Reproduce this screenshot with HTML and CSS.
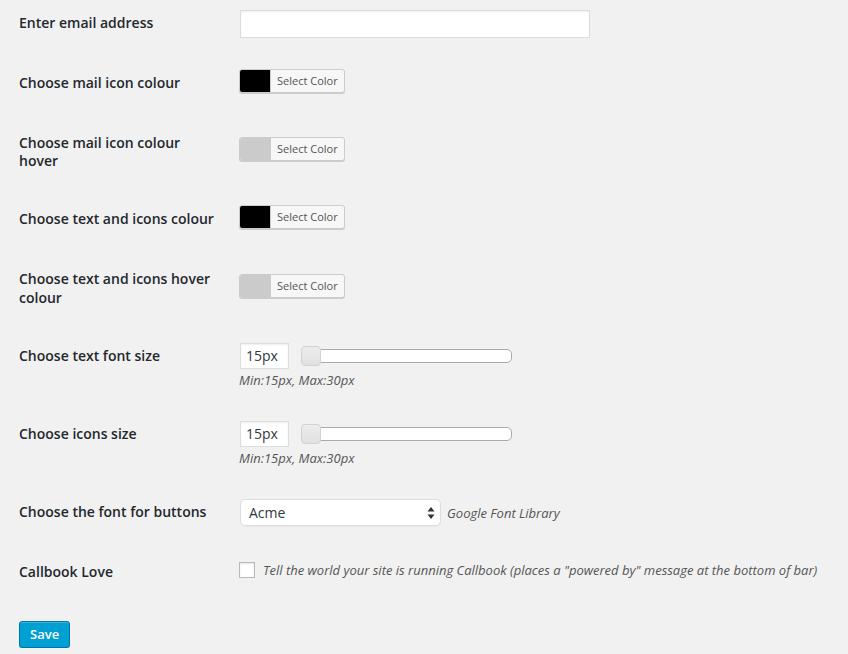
FILE: index.html
```html
<!DOCTYPE html>
<html lang="en">
<head>
<meta charset="utf-8">
<title>Callbook settings</title>
<link rel="stylesheet" href="styles.css">
</head>
<body>
<div class="wrap">
  <table class="form-table">
    <tbody>
      <tr>
        <th>Enter email address</th>
        <td><input class="regular-text" type="email" value=""></td>
      </tr>
      <tr>
        <th>Choose mail icon colour</th>
        <td><span class="color-btn"><span class="swatch swatch-black"></span><span class="color-label">Select Color</span></span></td>
      </tr>
      <tr>
        <th>Choose mail icon colour hover</th>
        <td><span class="color-btn"><span class="swatch swatch-grey"></span><span class="color-label">Select Color</span></span></td>
      </tr>
      <tr>
        <th>Choose text and icons colour</th>
        <td><span class="color-btn"><span class="swatch swatch-black"></span><span class="color-label">Select Color</span></span></td>
      </tr>
      <tr>
        <th>Choose text and icons hover colour</th>
        <td><span class="color-btn"><span class="swatch swatch-grey"></span><span class="color-label">Select Color</span></span></td>
      </tr>
      <tr>
        <th>Choose text font size</th>
        <td>
          <div class="slider-row">
            <input class="num" type="text" value="15px">
            <span class="track"><span class="handle"></span></span>
          </div>
          <p class="description">Min:15px, Max:30px</p>
        </td>
      </tr>
      <tr>
        <th>Choose icons size</th>
        <td>
          <div class="slider-row">
            <input class="num" type="text" value="15px">
            <span class="track"><span class="handle"></span></span>
          </div>
          <p class="description">Min:15px, Max:30px</p>
        </td>
      </tr>
      <tr>
        <th>Choose the font for buttons</th>
        <td>
          <div class="select-row">
            <span class="select">Acme
              <svg class="arrows" width="8" height="14" viewBox="0 0 8 14"><path d="M4 1 L7.5 5.5 H0.5 Z M4 13 L7.5 8.5 H0.5 Z" fill="#333"/></svg>
            </span>
            <span class="description inline">Google Font Library</span>
          </div>
        </td>
      </tr>
      <tr>
        <th>Callbook Love</th>
        <td class="check-cell">
          <span class="checkbox"></span>
          <span class="description inline">Tell the world your site is running Callbook (places a "powered by" message at the bottom of bar)</span>
        </td>
      </tr>
    </tbody>
  </table>
  <p class="submit"><button class="button-primary" type="button">Save</button></p>
</div>
</body>
</html>
```
FILE: styles.css
```css
html, body {
  margin: 0;
  padding: 0;
  background: #f1f1f1;
}
body {
  font-family: "Open Sans", "Liberation Sans", sans-serif;
  font-size: 13px;
  color: #444;
}
.wrap {
  padding-left: 19px;
  margin-top: -6px;
}
.form-table {
  border-collapse: collapse;
  border-spacing: 0;
}
.form-table th {
  width: 200px;
  padding: 20px 10px 20px 0;
  text-align: left;
  vertical-align: top;
  font-size: 14px;
  font-weight: 600;
  line-height: 1.3;
  color: #23282d;
}
.form-table td {
  padding: 15px 10px;
  vertical-align: middle;
  line-height: 1.3;
}
.regular-text {
  display: block;
  box-sizing: border-box;
  width: 350px;
  height: 28px;
  margin: 1px 0 1px 1px;
  padding: 3px 5px;
  border: 1px solid #ddd;
  box-shadow: inset 0 1px 2px rgba(0,0,0,0.07);
  background: #fff;
  font: 14px "Open Sans", sans-serif;
  outline: none;
}
.color-btn {
  display: inline-flex;
  height: 24px;
  box-sizing: border-box;
  margin: 0 6px 6px 0;
  border: 1px solid #ccc;
  border-radius: 3px;
  background: #f7f7f7;
  box-shadow: 0 1px 0 #ccc;
  overflow: hidden;
  vertical-align: top;
}
.swatch {
  width: 30px;
  border-right: 1px solid #ccc;
}
.swatch-black { background: #000; }
.swatch-grey { background: #cbcbcb; }
.color-label {
  padding: 0 6px;
  font-size: 11px;
  line-height: 22px;
  color: #555;
}
.slider-row {
  display: flex;
  align-items: center;
  height: 28px;
}
.num {
  box-sizing: border-box;
  width: 49px;
  height: 26px;
  margin: 1px 12px 1px 1px;
  padding: 3px 5px;
  border: 1px solid #ddd;
  box-shadow: inset 0 1px 2px rgba(0,0,0,0.07);
  background: #fff;
  font: 14px "Open Sans", sans-serif;
  color: #32373c;
  outline: none;
}
.track {
  position: relative;
  box-sizing: border-box;
  width: 211px;
  height: 14px;
  border: 1px solid #aaa;
  border-radius: 5px;
  background: #fff;
}
.handle {
  position: absolute;
  left: -1px;
  top: -4px;
  box-sizing: border-box;
  width: 20px;
  height: 20px;
  border: 1px solid #d3d3d3;
  border-radius: 4px;
  background: linear-gradient(#ececec, #e1e1e1);
}
.description {
  margin: 0;
  font-size: 13px;
  font-style: italic;
  line-height: 20px;
  color: #555;
}
.description.inline {
  margin: 0;
}
.select-row {
  display: flex;
  align-items: center;
  gap: 6px;
  height: 30px;
}
.select {
  position: relative;
  box-sizing: border-box;
  width: 201px;
  height: 27px;
  margin-left: 1px;
  padding: 0 8px;
  border: 1px solid #ddd;
  border-radius: 5px;
  background: #fff;
  box-shadow: 0 1px 1px rgba(0,0,0,0.04);
  font-size: 14px;
  line-height: 25px;
  color: #32373c;
}
.arrows {
  position: absolute;
  right: 5px;
  top: 6px;
}
.form-table td.check-cell {
  display: flex;
  align-items: center;
  gap: 8px;
  padding-top: 17px;
  line-height: 24px;
}
.checkbox {
  box-sizing: border-box;
  width: 16px;
  height: 16px;
  border: 1px solid #b4b9be;
  background: #fff;
  box-shadow: inset 0 1px 2px rgba(0,0,0,0.1);
}
.submit {
  margin: 20px 0 0;
  padding: 0;
}
.button-primary {
  box-sizing: border-box;
  height: 27px;
  padding: 0 10px 1px;
  border: 1px solid #0073aa;
  border-radius: 3px;
  background: #00a0d2;
  box-shadow: inset 0 1px 0 rgba(120,200,230,0.5), 0 1px 0 rgba(0,0,0,0.15);
  color: #fff;
  font: 600 13px "Open Sans", sans-serif;
  line-height: 24px;
  cursor: pointer;
}
```
